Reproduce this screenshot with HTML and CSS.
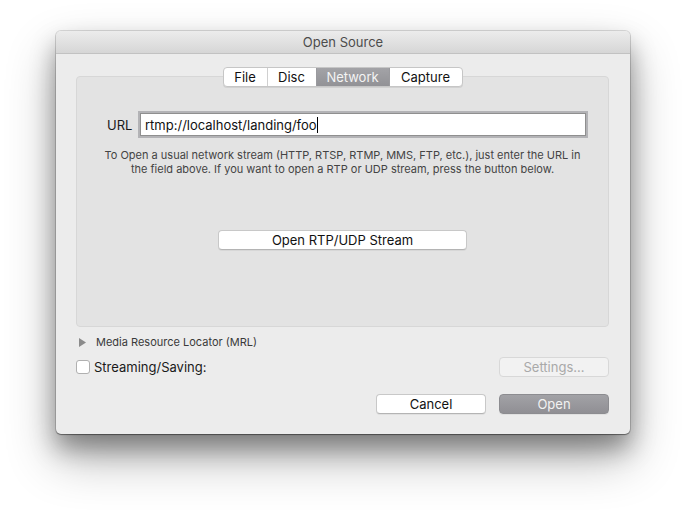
FILE: index.html
```html
<!DOCTYPE html>
<html>
<head>
<meta charset="utf-8">
<link rel="stylesheet" href="styles.css">
</head>
<body>
<div class="window">
  <div class="titlebar">Open Source</div>
  <div class="content">
    <div class="tabs">
      <div class="tab">File</div>
      <div class="tab">Disc</div>
      <div class="tab active">Network</div>
      <div class="tab">Capture</div>
    </div>
    <div class="panel">
      <div class="url-row">
        <span class="url-label">URL</span>
        <div class="field"><span class="field-text">rtmp://localhost/landing/foo</span><span class="caret"></span></div>
      </div>
      <p class="help">To Open a usual network stream (HTTP, RTSP, RTMP, MMS, FTP, etc.), just enter the URL in<br>the field above. If you want to open a RTP or UDP stream, press the button below.</p>
      <div class="rtp-wrap"><div class="btn rtp">Open RTP/UDP Stream</div></div>
    </div>
    <div class="mrl-row">
      <svg class="tri" width="8" height="9" viewBox="0 0 8 9"><path d="M0 0 L7 4.5 L0 9 Z" fill="#8b8b8b"/></svg>
      <span>Media Resource Locator (MRL)</span>
    </div>
    <div class="stream-row">
      <label class="check"><span class="box"></span><span>Streaming/Saving:</span></label>
      <div class="btn disabled">Settings...</div>
    </div>
    <div class="actions">
      <div class="btn">Cancel</div>
      <div class="btn primary">Open</div>
    </div>
  </div>
</div>
</body>
</html>
```
FILE: styles.css
```css
* { box-sizing: border-box; }
html, body { margin: 0; padding: 0; background: #fff; }
body {
  min-height: 514px;
  padding: 31px 0 0 56px;
  font-family: Inter, "Liberation Sans", Arial, sans-serif;
  color: #1a1a1a;
}
.window {
  width: 574px;
  height: 403px;
  background: #ececec;
  border-radius: 5px;
  box-shadow: 0 0 0 1px rgba(0,0,0,0.13), 0 1px 1px rgba(0,0,0,0.35), 0 14px 24px rgba(0,0,0,0.35), 0 24px 50px rgba(0,0,0,0.3);
  overflow: hidden;
}
.titlebar {
  height: 23px;
  background: linear-gradient(#ececec, #d6d6d6);
  border-bottom: 1px solid #c2c2c2;
  text-align: center;
  font-size: 13px;
  line-height: 23px;
  color: #4c4c4c;
}
.content {
  padding: 13px 21px 0 20px;
}
.tabs {
  position: relative;
  z-index: 1;
  display: flex;
  width: 240px;
  height: 20px;
  margin: 0 auto;
  background: #fff;
  border: 1px solid #c6c6c6;
  border-radius: 4px;
  box-shadow: 0 1px 0 rgba(0,0,0,0.08);
  overflow: hidden;
}
.tab {
  font-size: 13px;
  line-height: 18px;
  text-align: center;
  color: #111;
  border-left: 1px solid #d0d0d0;
}
.tab:first-child { border-left: none; width: 43px; }
.tab:nth-child(2) { width: 49px; }
.tab:nth-child(3) { width: 73px; }
.tab:nth-child(4) { flex: 1; }
.tab.active {
  background: linear-gradient(#a3a3a7, #929296);
  color: #f4f4f4;
  border-left-color: #9a9a9e;
}
.tab.active + .tab { border-left-color: #9a9a9e; }
.panel {
  margin-top: -11px;
  height: 251px;
  background: #e3e3e3;
  border: 1px solid #d7d7d7;
  border-radius: 4px;
  padding-top: 36px;
}
.url-row {
  display: flex;
  align-items: center;
  padding-left: 30px;
  padding-right: 20px;
}
.url-label {
  font-size: 13px;
  width: 31px;
  color: #1a1a1a;
}
.field {
  flex: 1;
  height: 23px;
  background: #fff;
  border: 1px solid #8f8f8f;
  box-shadow: 0 0 0 2px #b3b3b6;
  margin: 0 2px;
  display: flex;
  align-items: center;
  padding-left: 4px;
  font-size: 13px;
  color: #111;
}
.caret {
  display: inline-block;
  width: 1px;
  height: 16px;
  background: #000;
}
.help {
  margin: 12px 0 0;
  text-align: center;
  font-size: 11px;
  line-height: 14px;
  color: #444;
}
.rtp-wrap {
  display: flex;
  justify-content: center;
  margin-top: 54px;
}
.btn {
  height: 20px;
  width: 110px;
  background: #fff;
  border: 1px solid #c8c8c8;
  border-bottom-color: #b4b4b4;
  border-radius: 4px;
  box-shadow: 0 1px 0 rgba(0,0,0,0.05);
  font-size: 13px;
  line-height: 18px;
  text-align: center;
  color: #111;
}
.btn.rtp { width: 249px; }
.btn.disabled {
  background: #f2f2f2;
  border-color: #d8d8d8;
  color: #a9a9a9;
  box-shadow: none;
}
.btn.primary {
  background: linear-gradient(#a2a2a6, #908f94);
  border-color: #8c8c90;
  color: #f2f2f2;
}
.mrl-row {
  display: flex;
  align-items: center;
  height: 14px;
  margin-top: 8px;
  padding-left: 3px;
  font-size: 11px;
  color: #3a3a3a;
}
.tri { margin-right: 9px; }
.stream-row {
  display: flex;
  align-items: center;
  justify-content: space-between;
  margin-top: 8px;
  height: 20px;
}
.check {
  display: flex;
  align-items: center;
  font-size: 13px;
  color: #1a1a1a;
}
.box {
  width: 14px;
  height: 14px;
  background: #fff;
  border: 1px solid #b0b0b0;
  border-radius: 3px;
  margin-right: 4px;
}
.actions {
  display: flex;
  justify-content: flex-end;
  gap: 13px;
  margin-top: 17px;
}
```
